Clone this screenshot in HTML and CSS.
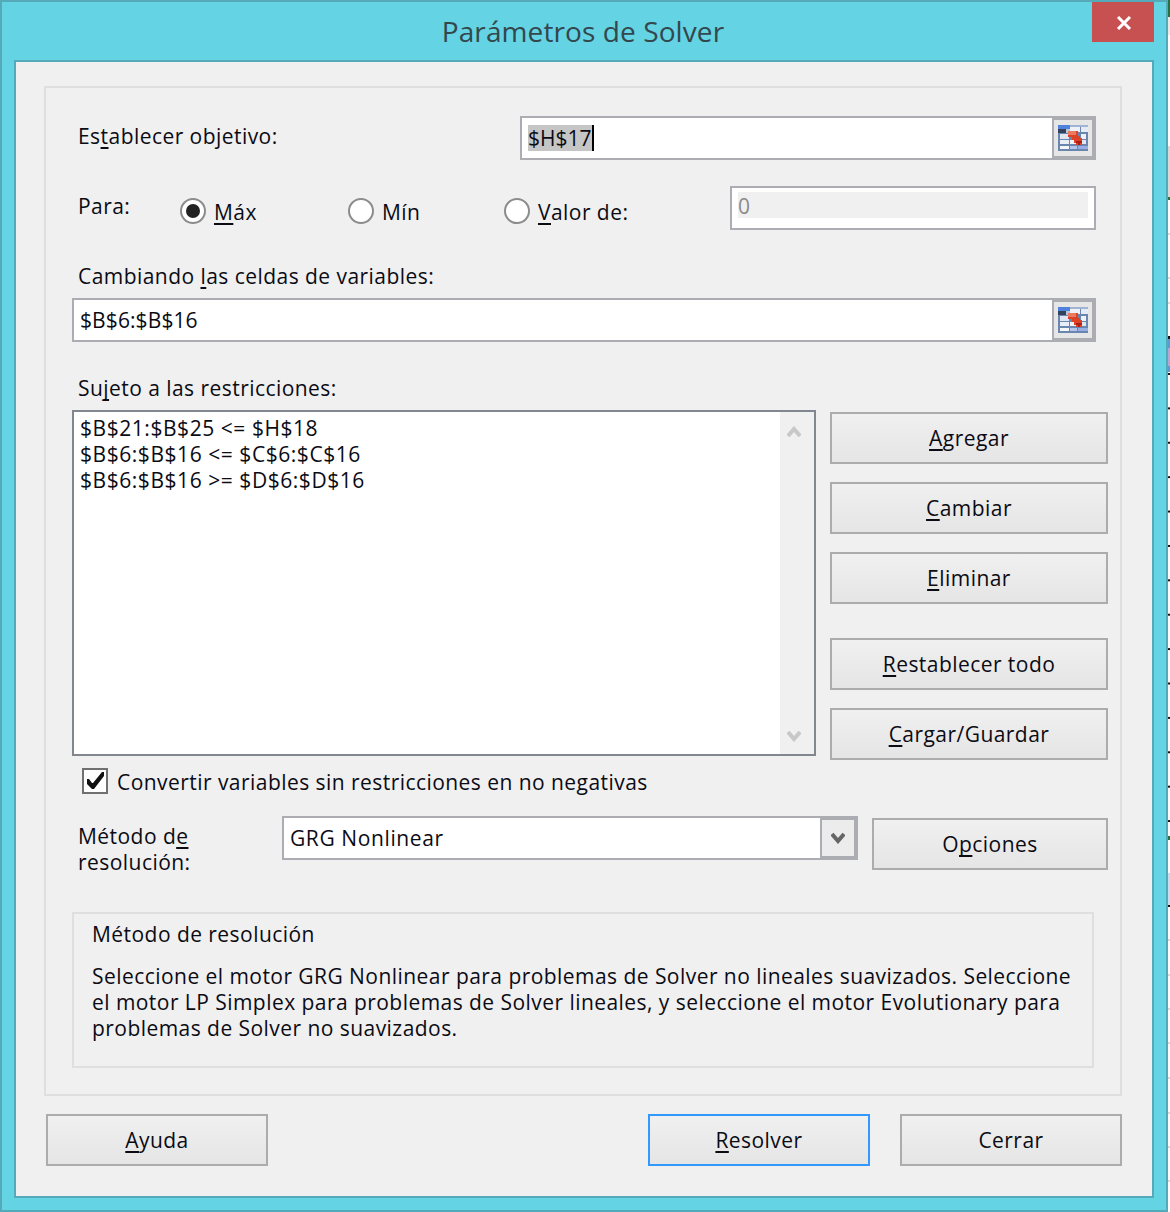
FILE: index.html
```html
<!DOCTYPE html>
<html>
	<head>
		<meta charset="utf-8" />
		<title>Parámetros de Solver</title>
		<link rel="stylesheet" href="styles.css">
	</head>
	<body>
		<div class="window">
			<div class="titlebar">
				<span class="title">Parámetros de Solver</span>
				<span class="close">
					<svg width="16" height="14" viewBox="0 0 16 14"><path d="M2 1l12 12M14 1L2 13" fill="none" stroke="#fff" stroke-width="3"/></svg>
				</span>
			</div>

			<div class="client">
				<div class="group">
					<div class="row-objective">
						<span class="label">Es<u>t</u>ablecer objetivo:</span>
						<div class="field field-objective">
							<span class="field-text"><span class="selected">$H$17</span><span class="caret"></span></span>
							<span class="ref-btn">
								<svg width="30" height="26" viewBox="0 0 30 26"><use href="#ref-icon"/></svg>
							</span>
						</div>
					</div>

					<div class="row-para">
						<span class="label label-para">Para:</span>
						<div class="radios">
							<span class="radio-item"><span class="radio radio-on"></span><span><u>M</u>áx</span></span>
							<span class="radio-item"><span class="radio"></span><span>Mín</span></span>
							<span class="radio-item"><span class="radio"></span><span><u>V</u>alor de:</span></span>
						</div>
						<div class="value-box"><span class="value-fill">0</span></div>
					</div>

					<div class="label label-vars">Cambiando <u>l</u>as celdas de variables:</div>
					<div class="field field-vars">
						<span class="field-text">$B$6:$B$16</span>
						<span class="ref-btn">
							<svg width="30" height="26" viewBox="0 0 30 26"><use href="#ref-icon"/></svg>
						</span>
					</div>

					<div class="label label-rest">Su<u>j</u>eto a las restricciones:</div>
					<div class="row-rest">
						<div class="listbox">
							<div class="list-lines">
								<div>$B$21:$B$25 &lt;= $H$18</div>
								<div>$B$6:$B$16 &lt;= $C$6:$C$16</div>
								<div>$B$6:$B$16 &gt;= $D$6:$D$16</div>
							</div>
							<div class="scrollbar">
								<svg width="14" height="12" viewBox="0 0 14 12"><path d="M1 10l6-7 6 7" fill="none" stroke="#c8c8c8" stroke-width="4"/></svg>
								<svg width="14" height="12" viewBox="0 0 14 12"><path d="M1 2l6 7 6-7" fill="none" stroke="#c8c8c8" stroke-width="4"/></svg>
							</div>
						</div>
						<div class="side-btns">
							<div class="btn"><span><u>A</u>gregar</span></div>
							<div class="btn"><span><u>C</u>ambiar</span></div>
							<div class="btn"><span><u>E</u>liminar</span></div>
							<div class="btn btn-split"><span><u>R</u>establecer todo</span></div>
							<div class="btn"><span><u>C</u>argar/Guardar</span></div>
						</div>
					</div>

					<div class="row-check">
						<span class="check">
							<svg width="22" height="22" viewBox="0 0 22 22"><path d="M3 9v5l5 5h2L20 6V2h-2L9 13h-1L5 9z" fill="#111"/></svg>
						</span>
						<span class="check-text">Convertir variables sin restricciones en no negativas</span>
					</div>

					<div class="row-method">
						<div class="label label-method">Método d<u>e</u><br>resolución:</div>
						<div class="field field-method">
							<span class="field-text">GRG Nonlinear</span>
							<span class="drop-btn">
								<svg width="14" height="12" viewBox="0 0 14 12"><path d="M1 2l6 7 6-7" fill="none" stroke="#666" stroke-width="4"/></svg>
							</span>
						</div>
						<div class="btn btn-options"><span>O<u>p</u>ciones</span></div>
					</div>

					<div class="info">
						<div class="info-title">Método de resolución</div>
						<p class="info-text">Seleccione el motor GRG Nonlinear para problemas de Solver no lineales suavizados. Seleccione<br>el motor LP Simplex para problemas de Solver lineales, y seleccione el motor Evolutionary para<br>problemas de Solver no suavizados.</p>
					</div>
				</div>

				<div class="footer">
					<div class="btn btn-foot"><span><u>A</u>yuda</span></div>
					<div class="btn btn-foot btn-default"><span><u>R</u>esolver</span></div>
					<div class="btn btn-foot"><span>Cerrar</span></div>
				</div>
			</div>
		</div>

		<!-- icono del selector de rango -->
		<svg class="defs" width="0" height="0">
			<symbol id="ref-icon" viewBox="0 0 30 26">
				<rect width="30" height="26" fill="#6a86ae"/>
				<rect x="0" y="0" width="12" height="4" fill="#4f82dc"/>
				<rect x="12" y="0" width="18" height="2" fill="#9fb4d4"/>
				<rect x="0" y="4" width="8" height="4" fill="#33425c"/>
				<rect x="8" y="4" width="4" height="4" fill="#b9c6da"/>
				<rect x="12" y="2" width="10" height="5" fill="#eef2f8"/>
				<rect x="23" y="2" width="7" height="5" fill="#e4ebf5"/>
				<rect x="2" y="9" width="9" height="5" fill="#dfe6f2"/>
				<rect x="23" y="9" width="5" height="5" fill="#eef2f8"/>
				<rect x="2" y="15" width="9" height="4" fill="#e9eef6"/>
				<rect x="23" y="15" width="5" height="4" fill="#dfe6f2"/>
				<rect x="2" y="21" width="9" height="3" fill="#f4f6fa"/>
				<rect x="12" y="15" width="10" height="4" fill="#eef2f8"/>
				<rect x="12" y="21" width="7" height="3" fill="#b3c6ec"/>
				<rect x="20" y="21" width="10" height="3" fill="#97aee4"/>
				<path d="M10 6h10v5h2v2h2v3h-2v2h2v2h-6v-2h-2v-3h-2v-3h-4z" fill="#dd4126"/>
				<rect x="10" y="6" width="8" height="4" fill="#ea7a60"/>
				<path d="M18 16h6v2h-2v2h-2v-2h-2z" fill="#ab2011"/>
			</symbol>
		</svg>
	</body>
</html>
```

FILE: styles.css
```css
html, body {
	margin: 0;
	padding: 0;
}

body {
	width: 1170px;
	height: 1212px;
	overflow: hidden;
	/* hoja de calculo que asoma detras del dialogo */
	background-color: #fff;
	background-image:
		linear-gradient(to bottom,
			#217346 0, #217346 17px, #e8e8e8 17px, #e8e8e8 35px, #fff 35px, #fff 146px,
			#d8d8d8 146px, #d8d8d8 197px, #217346 197px, #217346 200px, #fff 200px,
			#fff 233px, #d8d8d8 233px, #d8d8d8 235px, #fff 235px,
			#fff 277px, #d8d8d8 277px, #d8d8d8 279px, #fff 279px,
			#fff 302px, #d8d8d8 302px, #d8d8d8 304px, #fff 304px,
			#fff 336px, #111 336px, #111 339px, #5b9bd5 339px, #5b9bd5 348px, #b4a7d6 348px, #b4a7d6 366px,
			#5b9bd5 366px, #5b9bd5 372px, #fff 372px),
		linear-gradient(to bottom,
			#217346 0, #217346 4px, #fff 4px, #fff 37px,
			#c5dff0 37px, #c5dff0 69px, #111 69px, #111 71px, #fff 71px,
			#fff 103px, #d8d8d8 103px, #d8d8d8 105px, #fff 105px,
			#fff 138px, #d8d8d8 138px, #d8d8d8 140px, #fff 140px,
			#fff 172px, #d8d8d8 172px, #d8d8d8 174px, #fff 174px,
			#fff 206px, #d8d8d8 206px, #d8d8d8 208px, #fff 208px,
			#fff 241px, #d8d8d8 241px, #d8d8d8 243px, #fff 243px,
			#fff 276px, #d8d8d8 276px, #d8d8d8 278px, #fff 278px,
			#fff 310px, #d8d8d8 310px, #d8d8d8 312px, #fff 312px,
			#fff 344px, #d8d8d8 344px, #d8d8d8 346px, #fff 346px),
		linear-gradient(to bottom, #111 0, #111 2px, #fff 2px);
	background-size: 100% 372px, 100% 376px, 100% 34.4px;
	background-position: 0 0, 0 836px, 0 373px;
	background-repeat: no-repeat, no-repeat, repeat-y;
	font-family: "Open Sans", "Noto Sans", sans-serif;
	font-size: 21px;
	line-height: 26px;
	letter-spacing: 0.45px;
	color: #0b0b14;
}

.defs {
	display: none;
}

u {
	text-decoration-thickness: 2px;
	text-underline-offset: 3px;
	text-decoration-skip-ink: none;
}

.window {
	width: 1164px;
	height: 1208px;
	border: 2px solid #55aab9;
	background-color: #64d3e3;
	display: flex;
	flex-direction: column;
}

.titlebar {
	height: 58px;
	display: grid;
	grid-template-columns: 1fr auto 1fr;
	align-items: start;
	flex-shrink: 0;
}

.title {
	grid-column: 2;
	padding-right: 2px;
	font-size: 28px;
	line-height: 58px;
	letter-spacing: 0.1px;
	color: #33474d;
}

.close {
	grid-column: 3;
	justify-self: end;
	box-sizing: border-box;
	width: 62px;
	height: 40px;
	margin-right: 12px;
	padding: 2px 0 0 2px;
	background-color: #c75050;
	display: flex;
	align-items: center;
	justify-content: center;
}

.client {
	flex: 1;
	margin: 0 12px 12px 12px;
	border: 2px solid #55aab9;
	background-color: #f0f0f0;
	padding: 24px 30px 30px 28px;
	display: flex;
	flex-direction: column;
}

.group {
	border: 2px solid #dfdfdf;
	padding: 28px 12px 26px 26px;
}

.label {
	margin-left: 6px;
}

.field {
	display: flex;
	box-sizing: border-box;
	border: 2px solid #abadb3;
	background-color: #fff;
	height: 44px;
	align-items: stretch;
}

.field-text {
	flex: 1;
	padding: 7px 0 0 6px;
	display: flex;
	align-items: flex-start;
}

.selected {
	background-color: #c6c6c6;
	letter-spacing: 0;
}

.caret {
	width: 2px;
	height: 26px;
	background-color: #000;
}

.ref-btn {
	width: 38px;
	background-color: #e6e6e6;
	border: 2px solid #abadb3;
	display: flex;
	align-items: center;
	justify-content: center;
}

.ref-btn svg {
	display: block;
}

.row-objective {
	display: flex;
	justify-content: space-between;
	align-items: flex-start;
	padding-right: 12px;
}

.row-objective .label {
	margin-top: 7px;
}

.field-objective {
	width: 576px;
}

.row-para {
	display: flex;
	align-items: flex-start;
	margin-top: 26px;
	padding-right: 12px;
	height: 44px;
}

.label-para {
	width: 102px;
	margin-top: 7px;
}

.radios {
	display: grid;
	grid-template-columns: 168px 156px 226px;
	margin-top: 12px;
}

.radio-item {
	display: flex;
	gap: 8px;
}

.radio-item > span:last-child {
	margin-top: 1px;
}

.radio {
	box-sizing: border-box;
	width: 26px;
	height: 26px;
	border: 2px solid #8c8c8c;
	border-radius: 50%;
	background-color: #fff;
	display: flex;
	align-items: center;
	justify-content: center;
}

.radio-on::after {
	content: "";
	width: 14px;
	height: 14px;
	border-radius: 50%;
	background-color: #222;
}

.value-box {
	box-sizing: border-box;
	width: 366px;
	height: 44px;
	border: 2px solid #abadb3;
	background-color: #fff;
	padding: 4px 6px 10px 6px;
}

.value-fill {
	display: block;
	height: 26px;
	line-height: 28px;
	background-color: #f0f0f0;
	color: #8a8a8a;
}

.label-vars {
	margin-top: 33px;
}

.field-vars {
	margin-top: 9px;
	margin-right: 12px;
	letter-spacing: 0.1px;
}

.label-rest {
	margin-top: 33px;
}

.row-rest {
	display: flex;
	margin-top: 9px;
	height: 350px;
}

.listbox {
	box-sizing: border-box;
	width: 744px;
	height: 346px;
	border: 2px solid #82878f;
	background-color: #fff;
	display: flex;
}

.list-lines {
	flex: 1;
	padding: 3px 0 0 6px;
	letter-spacing: 0.55px;
}

.scrollbar {
	box-sizing: border-box;
	width: 34px;
	background-color: #f0f0f0;
	display: flex;
	flex-direction: column;
	justify-content: space-between;
	align-items: center;
	padding: 14px 6px 12px 0;
}

.side-btns {
	margin-left: 14px;
	width: 278px;
	padding-top: 2px;
	display: flex;
	flex-direction: column;
	gap: 18px;
}

.btn {
	box-sizing: border-box;
	height: 52px;
	border: 2px solid #acacac;
	background: linear-gradient(#f0f0f0, #e5e5e5);
	display: flex;
	align-items: center;
	justify-content: center;
}

.btn-split {
	margin-top: 16px;
}

.row-check {
	display: flex;
	gap: 9px;
	margin: 8px 0 0 10px;
	height: 26px;
}

.check-text {
	margin-top: 1px;
}

.check {
	box-sizing: border-box;
	width: 26px;
	height: 26px;
	border: 2px solid #707070;
	background-color: #fff;
	display: block;
}

.check svg {
	display: block;
}

.row-method {
	display: flex;
	align-items: flex-start;
	margin-top: 22px;
	height: 54px;
}

.label-method {
	width: 204px;
	margin-top: 7px;
	flex-shrink: 0;
}

.field-method {
	width: 576px;
	letter-spacing: 0.6px;
}

.drop-btn {
	width: 32px;
	background-color: #ececec;
	border: 2px solid #abadb3;
	display: flex;
	align-items: center;
	justify-content: center;
}

.btn-options {
	width: 236px;
	margin: 2px 0 0 14px;
}

.info {
	box-sizing: border-box;
	margin: 42px 14px 0 0;
	height: 156px;
	border: 2px solid #dfdfdf;
	padding: 7px 0 0 18px;
}

.info-text {
	margin: 16px 0 0 0;
	white-space: nowrap;
}

.footer {
	display: flex;
	gap: 30px;
	margin-top: 18px;
	padding-left: 2px;
}

.btn-foot {
	width: 222px;
}

.btn-default {
	margin-left: auto;
	border-color: #3399ff;
}
```
